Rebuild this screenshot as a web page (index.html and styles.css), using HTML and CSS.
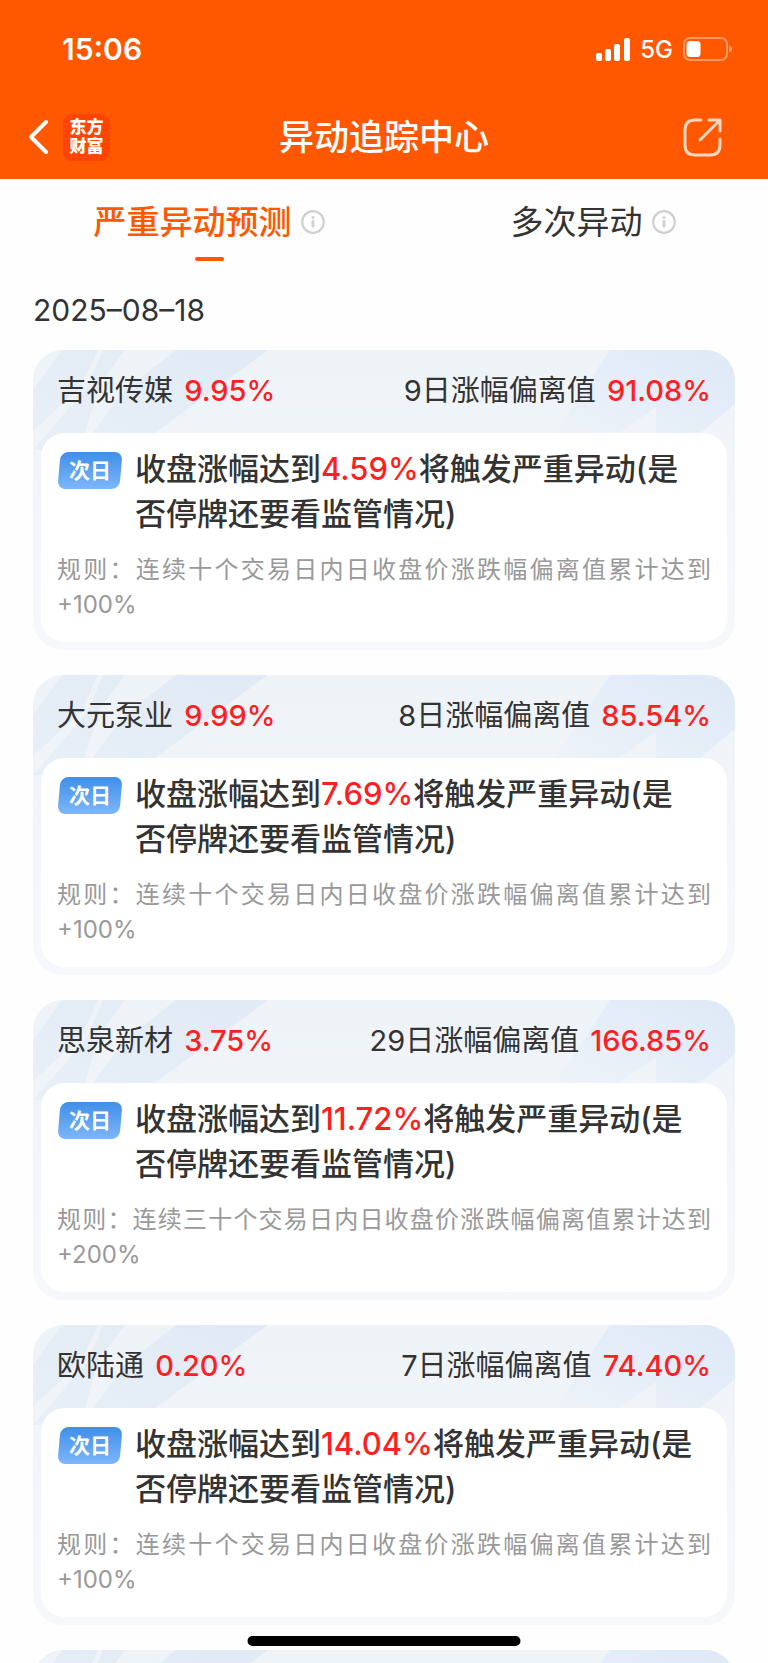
FILE: index.html
```html
<!DOCTYPE html>
<html lang="zh-CN">
<head>
    <meta charset="UTF-8">
    <meta name="viewport" content="width=device-width, initial-scale=1.0">
    <title>异动追踪中心</title>
    <link rel="stylesheet" href="styles.css">
</head>
<body>
    <!-- Shared shapes -->
    <svg class="sprite" aria-hidden="true">
        <linearGradient id="fade-left" x1="0" y1="1" x2="1" y2="0">
            <stop offset="0" stop-color="#e8eff7"/>
            <stop offset="1" stop-color="#e1eaf5"/>
        </linearGradient>
        <linearGradient id="fade-right" x1="0" y1="1" x2="1" y2="0">
            <stop offset="0" stop-color="#eef3f8"/>
            <stop offset="0.6" stop-color="#e3ecf8"/>
            <stop offset="1" stop-color="#dfe9f7"/>
        </linearGradient>
        <symbol id="icon-info" viewBox="0 0 24 24">
            <circle cx="12" cy="12" r="10.8" fill="none" stroke="#d0d0d0" stroke-width="2.2"/>
            <circle cx="12" cy="7.4" r="1.5" fill="#d0d0d0"/>
            <path d="M12 11.5v4.5" stroke="#d0d0d0" stroke-width="3" stroke-linecap="round"/>
        </symbol>
        <symbol id="stripes-left" viewBox="0 0 240 100">
            <path d="M29 0H65L48 37 0 81V40zM70 0H92L66 35 47 100H0L54 38zM143 0H235L122 83 100 100H47L92 40z" fill="url(#fade-left)"/>
        </symbol>
        <symbol id="stripes-right" viewBox="0 0 200 100">
            <path d="M75 0H200V54L165 83H121V57L84 83H20z" fill="url(#fade-right)"/>
        </symbol>
    </svg>

    <div class="app">
        <header class="header">
            <div class="status-bar">
                <span class="clock">15:06</span>
                <div class="status-icons">
                    <svg width="34" height="23" viewBox="0 0 34 23" fill="#fff">
                        <rect x="0" y="15" width="6" height="8" rx="2"/>
                        <rect x="9" y="11" width="6" height="12" rx="2"/>
                        <rect x="18" y="6" width="6" height="17" rx="2"/>
                        <rect x="28" y="0" width="6" height="23" rx="2"/>
                    </svg>
                    <span class="network">5G</span>
                    <svg width="49" height="24" viewBox="0 0 49 24">
                        <rect x="1" y="1" width="43" height="22" rx="6" fill="none" stroke="#ff9a66" stroke-width="2"/>
                        <rect x="3.5" y="4" width="14" height="16" rx="3.5" fill="#fff"/>
                        <path d="M46 8.5q3 1 3 3.5t-3 3.5z" fill="#ff9a66"/>
                    </svg>
                </div>
            </div>
            <nav class="nav-bar">
                <div class="nav-left">
                    <button class="icon-btn" type="button" aria-label="返回">
                        <svg width="20" height="36" viewBox="0 0 20 36">
                            <path d="M17 3 2 18l15 15" fill="none" stroke="#fff" stroke-width="4" stroke-linecap="round" stroke-linejoin="round"/>
                        </svg>
                    </button>
                    <div class="logo">东方<br>财富</div>
                </div>
                <h1 class="title">异动追踪中心</h1>
                <button class="icon-btn share" type="button" aria-label="分享">
                    <svg width="39" height="39" viewBox="0 0 39 39" fill="none" stroke="#ffd6c2" stroke-width="3" stroke-linecap="round" stroke-linejoin="round">
                        <path d="M18 2H12Q2 2 2 12V27Q2 37 12 37H27Q37 37 37 27V21"/>
                        <path d="M26 2H37V13M36 3 17 22"/>
                    </svg>
                </button>
            </nav>
        </header>

        <div class="tabs">
            <button class="tab active" type="button">严重异动预测<svg class="info"><use href="#icon-info"/></svg></button>
            <button class="tab" type="button">多次异动<svg class="info"><use href="#icon-info"/></svg></button>
        </div>

        <main class="content">
            <p class="date">2025–08–18</p>

            <section class="card">
                <svg class="stripes left"><use href="#stripes-left"/></svg>
                <svg class="stripes right"><use href="#stripes-right"/></svg>
                <div class="card-header">
                    <div>吉视传媒 <b class="up">9.95%</b></div>
                    <div>9日涨幅偏离值 <b class="up">91.08%</b></div>
                </div>
                <div class="card-body">
                    <div class="alert">
                        <span class="badge">次日</span>
                        <h2>收盘涨幅达到<span class="up">4.59%</span>将触发严重异动(是否停牌还要看监管情况)</h2>
                    </div>
                    <p class="rule">规则：连续十个交易日内日收盘价涨跌幅偏离值累计达到+100%</p>
                </div>
            </section>

            <section class="card">
                <svg class="stripes left"><use href="#stripes-left"/></svg>
                <svg class="stripes right"><use href="#stripes-right"/></svg>
                <div class="card-header">
                    <div>大元泵业 <b class="up">9.99%</b></div>
                    <div>8日涨幅偏离值 <b class="up">85.54%</b></div>
                </div>
                <div class="card-body">
                    <div class="alert">
                        <span class="badge">次日</span>
                        <h2>收盘涨幅达到<span class="up">7.69%</span>将触发严重异动(是否停牌还要看监管情况)</h2>
                    </div>
                    <p class="rule">规则：连续十个交易日内日收盘价涨跌幅偏离值累计达到+100%</p>
                </div>
            </section>

            <section class="card">
                <svg class="stripes left"><use href="#stripes-left"/></svg>
                <svg class="stripes right"><use href="#stripes-right"/></svg>
                <div class="card-header">
                    <div>思泉新材 <b class="up">3.75%</b></div>
                    <div>29日涨幅偏离值 <b class="up">166.85%</b></div>
                </div>
                <div class="card-body">
                    <div class="alert">
                        <span class="badge">次日</span>
                        <h2>收盘涨幅达到<span class="up">11.72%</span>将触发严重异动(是否停牌还要看监管情况)</h2>
                    </div>
                    <p class="rule">规则：连续三十个交易日内日收盘价涨跌幅偏离值累计达到+200%</p>
                </div>
            </section>

            <section class="card">
                <svg class="stripes left"><use href="#stripes-left"/></svg>
                <svg class="stripes right"><use href="#stripes-right"/></svg>
                <div class="card-header">
                    <div>欧陆通 <b class="up">0.20%</b></div>
                    <div>7日涨幅偏离值 <b class="up">74.40%</b></div>
                </div>
                <div class="card-body">
                    <div class="alert">
                        <span class="badge">次日</span>
                        <h2>收盘涨幅达到<span class="up">14.04%</span>将触发严重异动(是否停牌还要看监管情况)</h2>
                    </div>
                    <p class="rule">规则：连续十个交易日内日收盘价涨跌幅偏离值累计达到+100%</p>
                </div>
            </section>

            <section class="card">
                <svg class="stripes left"><use href="#stripes-left"/></svg>
                <svg class="stripes right"><use href="#stripes-right"/></svg>
                <div class="card-header"></div>
            </section>
        </main>

        <div class="home-indicator"></div>
    </div>
</body>
</html>
```
FILE: styles.css
```css
:root {
    --primary-color: #ff5800;
    --up-color: #fd1f22;
    --text-color: #333;
    --muted-color: #999;
}

* {
    box-sizing: border-box;
}

body {
    margin: 0;
    background: #fefefe;
    color: var(--text-color);
    font-family: Inter, "Noto Sans CJK SC", sans-serif;
}

h1, h2, p {
    margin: 0;
}

button {
    border: 0;
    padding: 0;
    background: none;
    color: inherit;
    font: inherit;
}

svg {
    display: block;
    flex: none;
}

.sprite {
    position: absolute;
    width: 0;
    height: 0;
}

.app {
    height: 100vh;
    overflow: hidden;
}

/* Header */
.header {
    background: var(--primary-color);
    color: #fff;
}

.status-bar {
    display: flex;
    justify-content: space-between;
    align-items: center;
    height: 98px;
    padding: 0 36px 0 62px;
}

.clock {
    font-size: 30px;
    font-weight: 600;
}

.status-icons {
    display: flex;
    align-items: center;
    gap: 10px;
}

.network {
    font-size: 24px;
    font-weight: 500;
}

.nav-bar {
    display: grid;
    grid-template-columns: 1fr auto 1fr;
    align-items: center;
    height: 81px;
    padding: 0 29px 3px;
}

.nav-left {
    display: flex;
    align-items: center;
    gap: 14px;
}

.logo {
    width: 47px;
    height: 47px;
    padding: 4px 0;
    border-radius: 9px;
    background: #ff4500;
    font-size: 17px;
    font-weight: 900;
    line-height: 19px;
    text-align: center;
}

.title {
    font-size: 35px;
    font-weight: 500;
    line-height: 50px;
}

.share {
    justify-self: end;
    margin-right: 17px;
}

/* Tabs */
.tabs {
    display: grid;
    grid-template-columns: 1fr 1fr;
}

.tab {
    position: relative;
    display: flex;
    justify-content: center;
    align-items: center;
    gap: 9px;
    height: 86px;
    padding: 0 0 4px 34px;
    font-size: 33px;
}

.tab.active {
    color: var(--primary-color);
    font-weight: 500;
}

.tab.active::after {
    content: "";
    position: absolute;
    bottom: 4px;
    width: 29px;
    height: 4px;
    border-radius: 2px;
    background: var(--primary-color);
}

.info {
    width: 24px;
    height: 24px;
    margin-top: 4px;
}

/* List */
.content {
    display: flex;
    flex-direction: column;
    gap: 25px;
    padding: 25px 33px 0;
}

.date {
    font-size: 30px;
    line-height: 40px;
    margin-bottom: -5px;
}

.card {
    position: relative;
    overflow: hidden;
    padding: 0 8px 8px;
    border-radius: 30px;
    background: linear-gradient(#eef3f8, #f6f8fc);
}

.stripes {
    position: absolute;
    top: 0;
    height: 100px;
}

.stripes.left {
    left: 0;
    width: 240px;
}

.stripes.right {
    right: 0;
    width: 200px;
}

.card-header {
    position: relative;
    display: flex;
    justify-content: space-between;
    align-items: center;
    height: 83px;
    padding: 0 16px 8px;
    font-size: 29px;
}

.up {
    color: var(--up-color);
    font-weight: 500;
}

.card-header .up {
    margin-left: 3px;
}

.card-body {
    position: relative;
    padding: 13px 16px 20px;
    border-radius: 24px;
    background: #fff;
}

.alert {
    display: flex;
    align-items: flex-start;
    gap: 14px;
    margin-bottom: 16px;
    padding: 0 11px 0 2px;
}

.alert h2 {
    font-size: 31px;
    font-weight: 500;
    line-height: 45px;
}

.badge {
    position: relative;
    z-index: 0;
    flex: none;
    width: 62px;
    height: 37px;
    margin-top: 6px;
    color: #fff;
    font-size: 21px;
    font-weight: 700;
    line-height: 37px;
    text-align: center;
}

/* Slanted plate behind the upright badge text */
.badge::before {
    content: "";
    position: absolute;
    inset: 0;
    z-index: -1;
    border-radius: 8px;
    background: linear-gradient(#3f8fe8, #7db6fa);
    transform: skewX(-5deg);
}

.rule {
    color: var(--muted-color);
    font-size: 24px;
    line-height: 35px;
    text-align: justify;
}

.home-indicator {
    position: fixed;
    bottom: 17px;
    left: 50%;
    width: 273px;
    height: 10px;
    border-radius: 5px;
    background: #000;
    transform: translateX(-50%);
}
```
